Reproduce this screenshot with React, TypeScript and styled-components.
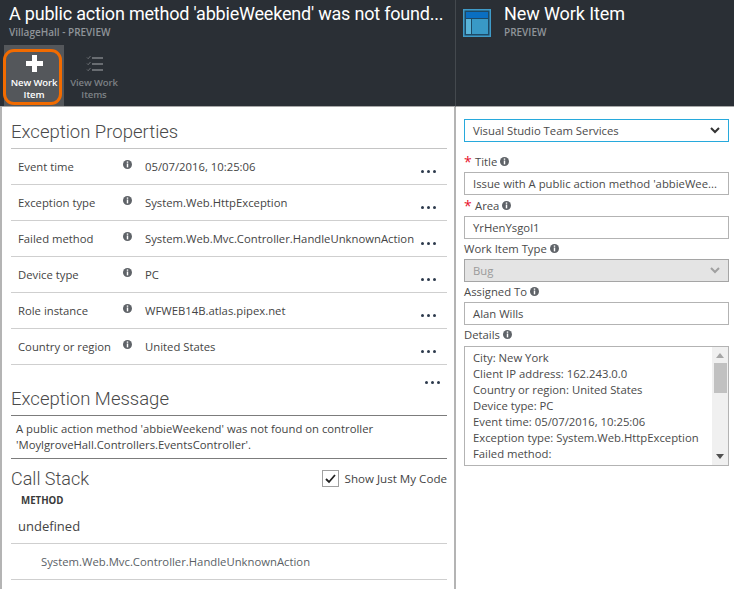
import { createGlobalStyle, styled } from "styled-components";

const GlobalStyle = createGlobalStyle`
  html, body { margin: 0; padding: 0; background: #fff; }
  body { font-family: "Open Sans", "Noto Sans", sans-serif; color: #3a3a3a; overflow: hidden; }
`;

const uiFont = `"Open Sans", "Noto Sans", sans-serif`;
const titleFont = `Roboto, "Open Sans", sans-serif`;

const Shell = styled.div`
  display: grid;
  grid-template-columns: 456px 278px;
  width: 734px;
  height: 589px;
  overflow: hidden;
`;

const Blade = styled.section`
  display: flex;
  flex-direction: column;
  height: 589px;
`;

const BladeHeader = styled.header<{ $first?: boolean }>`
  height: 106px;
  background: #2a2f35;
  border-bottom: 1px solid #a8a8a8;
  border-right: ${({ $first }) => ($first ? "1px solid #44494e" : "0")};
  flex: none;
`;

const TitleBlock = styled.div`
  padding: 0 0 0 9px;
  height: 45px;
`;

const BladeTitle = styled.h1<{ $spacing: number }>`
  margin: 0;
  font-family: ${titleFont};
  font-weight: 400;
  font-size: 18px;
  line-height: 28px;
  letter-spacing: ${({ $spacing }) => $spacing}px;
  color: #fff;
  white-space: nowrap;
`;

const BladeSub = styled.div`
  font-family: ${uiFont};
  font-size: 10px;
  font-weight: 600;
  line-height: 12px;
  margin-top: -2px;
  color: #8f9499;
`;

const CommandBar = styled.div`
  display: flex;
  padding-left: 4px;
  height: 61px;
`;

const Command = styled.div<{ $active?: boolean }>`
  position: relative;
  width: 60px;
  height: 61px;
  box-sizing: border-box;
  background: ${({ $active }) => ($active ? "#54575b" : "transparent")};
  color: ${({ $active }) => ($active ? "#fff" : "#7d8185")};
  display: flex;
  flex-direction: column;
  align-items: center;
  padding-top: 10px;
`;

const CommandLabel = styled.div`
  font-size: 9.5px;
  font-weight: 600;
  line-height: 12px;
  letter-spacing: -0.1px;
  text-align: center;
  margin-top: 5px;
  white-space: pre-line;
`;

const Highlight = styled.div`
  position: absolute;
  left: -1px;
  top: 4px;
  width: 59px;
  height: 56px;
  box-sizing: border-box;
  border: 3px solid #f26b00;
  border-radius: 11px;
`;

const RightHead = styled.div`
  display: flex;
  padding: 9px 0 0 7px;
  gap: 13px;
`;

const RightHeadText = styled.div`
  margin-top: -9px;
`;

const LeftBody = styled.div`
  flex: 1;
  padding: 0 7px 0 9px;
  border-left: 2px solid #b4b4b4;
  border-right: 2px solid #b4b4b4;
`;

const SectionTitle = styled.h2<{ $dark?: boolean }>`
  margin: 0;
  font-family: ${titleFont};
  font-weight: 300;
  font-size: 18.5px;
  line-height: 31px;
  padding-top: 10px;
  color: #4a4a4a;
  border-bottom: 1px solid ${({ $dark }) => ($dark ? "#7c7c7c" : "#c4c4c4")};
`;

const PropRow = styled.div`
  position: relative;
  display: flex;
  height: 36px;
  box-sizing: border-box;
  border-bottom: 1px solid #cfcfcf;
  font-size: 11.3px;
  line-height: 35px;
  padding-left: 7px;
  color: #444;
`;

const PropLabel = styled.div`
  width: 105px;
  flex: none;
`;

const PropInfo = styled.div`
  width: 22px;
  flex: none;
  display: flex;
  margin-top: 11px;
  height: 10px;
`;

const PropValue = styled.div`
  flex: 1;
  white-space: nowrap;
`;

const RowDots = styled.div`
  position: absolute;
  right: 11px;
  top: 21px;
  display: flex;
  gap: 3px;
`;

const Dot = styled.i<{ $size: number }>`
  display: block;
  width: ${({ $size }) => $size}px;
  height: ${({ $size }) => $size}px;
  border-radius: 50%;
  background: #2c3a4c;
`;

const MessageHead = styled.div`
  position: relative;
  padding-top: 9px;
`;

const SectionDots = styled.div`
  position: absolute;
  right: 7px;
  top: 16px;
  display: flex;
  gap: 3px;
`;

const MessageBox = styled.div`
  font-size: 11.3px;
  line-height: 16px;
  padding: 5px 5px 0;
  color: #444;
  border-bottom: 1px solid #7c7c7c;
  box-sizing: border-box;
  height: 43px;
`;

const CallHead = styled.div`
  display: flex;
  justify-content: space-between;
  align-items: center;
  height: 36px;
  box-sizing: border-box;
  padding-top: 3px;
`;

const CallTitle = styled.h2`
  margin: 0;
  font-family: ${titleFont};
  font-weight: 300;
  font-size: 18px;
  color: #4a4a4a;
`;

const CheckWrap = styled.label`
  display: flex;
  align-items: center;
  gap: 6px;
  font-size: 11.6px;
  color: #444;
`;

const CheckBox = styled.span`
  width: 17px;
  height: 17px;
  box-sizing: border-box;
  border: 1px solid #a0a0a0;
  display: flex;
  align-items: center;
  justify-content: center;
`;

const ColumnHead = styled.div`
  font-size: 9.7px;
  font-weight: 700;
  line-height: 12px;
  padding-left: 10px;
  color: #3a3a3a;
`;

const StackGroup = styled.div`
  height: 37px;
  font-size: 13px;
  line-height: 38px;
  padding-left: 7px;
  box-sizing: border-box;
  border-bottom: 1px solid #cfcfcf;
  color: #444;
`;

const StackFrame = styled.div`
  height: 36px;
  font-size: 11.3px;
  line-height: 36px;
  padding-left: 30px;
  box-sizing: border-box;
  border-bottom: 1px solid #cfcfcf;
  color: #5a5f66;
`;

const FormBody = styled.div`
  padding: 12px 5px 0 8px;
  display: flex;
  flex-direction: column;
`;

const Control = styled.div<{ $tone?: "blue" | "disabled" }>`
  height: 23px;
  box-sizing: border-box;
  border: 1px solid
    ${({ $tone }) =>
      $tone === "blue" ? "#27a9dc" : $tone === "disabled" ? "#a5a5a5" : "#b3b3b3"};
  background: ${({ $tone }) => ($tone === "disabled" ? "#e4e4e4" : "#fff")};
  color: ${({ $tone }) => ($tone === "disabled" ? "#9a9a9a" : "#4a4a4a")};
  font-size: 11.3px;
  line-height: 21px;
  padding: 0 8px;
  display: flex;
  justify-content: space-between;
  align-items: center;
  white-space: nowrap;
  overflow: hidden;
`;

const FieldLabel = styled.div<{ $top: number }>`
  display: flex;
  align-items: center;
  gap: 3px;
  height: 20px;
  box-sizing: border-box;
  padding-bottom: 2px;
  margin-top: ${({ $top }) => $top}px;
  font-size: 11.3px;
  color: #4a4a4a;
`;

const Required = styled.span`
  color: #e8112d;
  font-size: 14px;
  width: 8px;
  line-height: 20px;
  padding-top: 2px;
`;

const TextArea = styled.div`
  position: relative;
  height: 120px;
  box-sizing: border-box;
  border: 1px solid #b3b3b3;
  margin-top: 1px;
  padding: 3px 0 0 8px;
  font-size: 11.3px;
  line-height: 16px;
  color: #4a4a4a;
  overflow: hidden;
  white-space: nowrap;
`;

const Scrollbar = styled.div`
  position: absolute;
  right: 0;
  top: 0;
  bottom: 0;
  width: 16px;
  background: #f0f0f0;
  display: flex;
  flex-direction: column;
  align-items: center;
  padding-top: 6px;
  box-sizing: border-box;
`;

const ScrollThumb = styled.div`
  width: 13px;
  height: 30px;
  background: #c1c1c1;
  margin-top: 5px;
`;

const ScrollDown = styled.div`
  position: absolute;
  bottom: 6px;
  left: 4px;
  display: flex;
`;

const Info = ({ size = 9, color = "#5f6368" }: { size?: number; color?: string }) => (
  <svg width={size} height={size} viewBox="0 0 10 10">
    <circle cx="5" cy="5" r="5" fill={color} />
    <rect x="4.2" y="1.6" width="1.6" height="1.5" fill="#fff" />
    <rect x="4.2" y="3.9" width="1.6" height="4.3" fill="#fff" />
  </svg>
);

const Chevron = ({ color }: { color: string }) => (
  <svg width="10" height="7" viewBox="0 0 10 7">
    <path d="M1 1l4 4 4-4" fill="none" stroke={color} strokeWidth="2" />
  </svg>
);

const Dots = ({ size }: { size: number }) => (
  <>
    <Dot $size={size} />
    <Dot $size={size} />
    <Dot $size={size} />
  </>
);

const properties = [
  ["Event time", "05/07/2016, 10:25:06"],
  ["Exception type", "System.Web.HttpException"],
  ["Failed method", "System.Web.Mvc.Controller.HandleUnknownAction"],
  ["Device type", "PC"],
  ["Role instance", "WFWEB14B.atlas.pipex.net"],
  ["Country or region", "United States"],
];

const details = [
  "City: New York",
  "Client IP address: 162.243.0.0",
  "Country or region: United States",
  "Device type: PC",
  "Event time: 05/07/2016, 10:25:06",
  "Exception type: System.Web.HttpException",
  "Failed method:",
];

export default function App() {
  return (
    <>
      <GlobalStyle />
      <Shell>
        <Blade>
          <BladeHeader $first>
            <TitleBlock>
              <BladeTitle $spacing={-0.2}>A public action method 'abbieWeekend' was not found...</BladeTitle>
              <BladeSub>VillageHall - PREVIEW</BladeSub>
            </TitleBlock>
            <CommandBar>
              <Command $active>
                <svg width="17" height="17" viewBox="0 0 17 17">
                  <path d="M6 0h5v6h6v5h-6v6H6v-6H0V6h6z" fill="#fff" />
                </svg>
                <CommandLabel>{"New Work\nItem"}</CommandLabel>
                <Highlight />
              </Command>
              <Command>
                <svg width="17" height="17" viewBox="0 0 17 17" fill="none" stroke="#7d8185">
                  <path d="M6 3h11M6 9h11M6 15h11" strokeWidth="1.6" />
                  <path d="M1 2.5l1.2 1.2L4.5 1M1 8.5l1.2 1.2L4.5 7M1 14.5l1.2 1.2L4.5 13" strokeWidth="0.8" />
                </svg>
                <CommandLabel>{"View Work\nItems"}</CommandLabel>
              </Command>
            </CommandBar>
          </BladeHeader>
          <LeftBody>
            <SectionTitle>Exception Properties</SectionTitle>
            {properties.map(([label, value]) => (
              <PropRow key={label}>
                <PropLabel>{label}</PropLabel>
                <PropInfo>
                  <Info />
                </PropInfo>
                <PropValue>{value}</PropValue>
                <RowDots>
                  <Dots size={3} />
                </RowDots>
              </PropRow>
            ))}
            <MessageHead>
              <SectionDots>
                <Dots size={3} />
              </SectionDots>
              <SectionTitle $dark>Exception Message</SectionTitle>
            </MessageHead>
            <MessageBox>
              A public action method 'abbieWeekend' was not found on controller
              <br />
              'MoylgroveHall.Controllers.EventsController'.
            </MessageBox>
            <CallHead>
              <CallTitle>Call Stack</CallTitle>
              <CheckWrap>
                <CheckBox>
                  <svg width="11" height="10" viewBox="0 0 11 10">
                    <path d="M1 5l3 3 6-7" fill="none" stroke="#222" strokeWidth="1.8" />
                  </svg>
                </CheckBox>
                Show Just My Code
              </CheckWrap>
            </CallHead>
            <ColumnHead>METHOD</ColumnHead>
            <StackGroup>undefined</StackGroup>
            <StackFrame>System.Web.Mvc.Controller.HandleUnknownAction</StackFrame>
          </LeftBody>
        </Blade>
        <Blade>
          <BladeHeader>
            <RightHead>
              <svg width="28" height="28" viewBox="0 0 28 28">
                <rect x="0.75" y="0.75" width="26.5" height="26.5" fill="#1e4a66" stroke="#3f9bc8" strokeWidth="1.5" />
                <rect x="3" y="3" width="22" height="6" fill="#0a6fc2" />
                <rect x="3" y="10" width="5" height="15" fill="#59b4d9" />
                <rect x="9" y="10" width="16" height="15" fill="#3999c6" />
              </svg>
              <RightHeadText>
                <BladeTitle $spacing={-0.1}>New Work Item</BladeTitle>
                <BladeSub>PREVIEW</BladeSub>
              </RightHeadText>
            </RightHead>
          </BladeHeader>
          <FormBody>
            <Control $tone="blue">
              Visual Studio Team Services
              <Chevron color="#333" />
            </Control>
            <FieldLabel $top={10}>
              <Required>*</Required>Title <Info />
            </FieldLabel>
            <Control>Issue with A public action method 'abbieWee...</Control>
            <FieldLabel $top={1}>
              <Required>*</Required>Area <Info />
            </FieldLabel>
            <Control>YrHenYsgol1</Control>
            <FieldLabel $top={0}>
              Work Item Type <Info />
            </FieldLabel>
            <Control $tone="disabled">
              Bug
              <Chevron color="#a0a0a0" />
            </Control>
            <FieldLabel $top={0}>
              Assigned To <Info />
            </FieldLabel>
            <Control>Alan Wills</Control>
            <FieldLabel $top={0}>
              Details <Info />
            </FieldLabel>
            <TextArea>
              {details.map((line) => (
                <div key={line}>{line}</div>
              ))}
              <Scrollbar>
                <svg width="8" height="5" viewBox="0 0 8 5">
                  <path d="M0 5l4-5 4 5z" fill="#a6a6a6" />
                </svg>
                <ScrollThumb />
                <ScrollDown>
                  <svg width="8" height="5" viewBox="0 0 8 5">
                    <path d="M0 0l4 5 4-5z" fill="#505050" />
                  </svg>
                </ScrollDown>
              </Scrollbar>
            </TextArea>
          </FormBody>
        </Blade>
      </Shell>
    </>
  );
}
